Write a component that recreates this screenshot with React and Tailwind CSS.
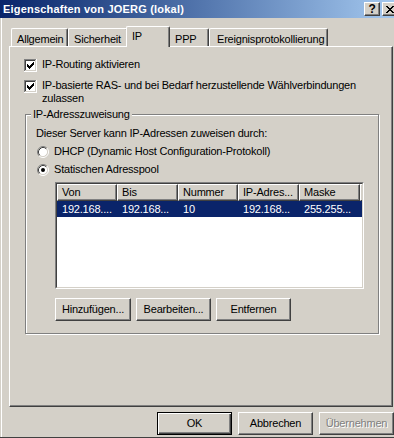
import React from 'react';

const checkPixels = [
  [9, 3, 1],
  [8, 4, 2],
  [3, 5, 1],
  [7, 5, 3],
  [3, 6, 2],
  [6, 6, 3],
  [3, 7, 5],
  [4, 8, 3],
  [5, 9, 1],
];

const closePixels = [
  [0, 0, 2], [6, 0, 2],
  [1, 1, 2], [5, 1, 2],
  [2, 2, 4],
  [3, 3, 2],
  [2, 4, 4],
  [1, 5, 2], [5, 5, 2],
  [0, 6, 2], [6, 6, 2],
];

const CheckBox = () => (
  <svg width="13" height="13" viewBox="0 0 13 13" shapeRendering="crispEdges" className="shrink-0 mt-px">
    <rect x="0" y="0" width="13" height="13" fill="#fff" />
    <rect x="0" y="0" width="12" height="1" fill="#808080" />
    <rect x="0" y="0" width="1" height="12" fill="#808080" />
    <rect x="1" y="1" width="10" height="1" fill="#404040" />
    <rect x="1" y="1" width="1" height="10" fill="#404040" />
    <rect x="1" y="11" width="11" height="1" fill="#d4d0c8" />
    <rect x="11" y="1" width="1" height="11" fill="#d4d0c8" />
    {checkPixels.map(([x, y, w], i) => (
      <rect key={i} x={x} y={y} width={w} height="1" fill="#000" />
    ))}
  </svg>
);

const Radio = ({ checked }) => (
  <svg width="12" height="12" viewBox="0 0 12 12" className="shrink-0">
    <circle cx="6" cy="6" r="4.5" fill="#fff" />
    <path d="M2.11 9.89 A5.5 5.5 0 0 1 9.89 2.11" fill="none" stroke="#808080" strokeWidth="1" />
    <path d="M9.89 2.11 A5.5 5.5 0 0 1 2.11 9.89" fill="none" stroke="#fff" strokeWidth="1" />
    <path d="M2.82 9.18 A4.5 4.5 0 0 1 9.18 2.82" fill="none" stroke="#404040" strokeWidth="1" />
    <path d="M9.18 2.82 A4.5 4.5 0 0 1 2.82 9.18" fill="none" stroke="#d4d0c8" strokeWidth="1" />
    {checked && <circle cx="6" cy="6" r="2" fill="#000" />}
  </svg>
);

const Button = ({ children, className = '' }) => (
  <div
    className={`h-[23px] flex items-center justify-center bg-[#d4d0c8] border border-t-white border-l-white border-r-[#404040] border-b-[#404040] shadow-[inset_-1px_-1px_#808080] ${className}`}
  >
    {children}
  </div>
);

const columns = [
  { title: 'Von', value: '192.168....', w: 'w-[60px]' },
  { title: 'Bis', value: '192.168...', w: 'w-[61px]' },
  { title: 'Nummer', value: '10', w: 'w-[60px]' },
  { title: 'IP-Adres...', value: '192.168...', w: 'w-[61px]' },
  { title: 'Maske', value: '255.255...', w: 'w-[61px]' },
];

export default function App() {
  return (
    <div className="w-[394px] h-[438px] overflow-hidden flex flex-col bg-[#d4d0c8] border-b border-b-[#404040] text-[11px] text-black font-['Liberation_Sans',Arial,sans-serif] tracking-[-0.2px]">
      {/* title bar */}
      <div className="h-[18px] w-[398px] shrink-0 flex items-center bg-linear-to-r from-[#0a246a] to-[#a6caf0]">
        <span className="pl-[3px] pt-px font-bold text-white tracking-[0.2px]">Eigenschaften von JOERG (lokal)</span>
        <div className="ml-auto flex gap-[2px]">
          <div className="w-[16px] h-[14px] flex items-center justify-center bg-[#d4d0c8] border border-t-white border-l-white border-r-[#404040] border-b-[#404040] shadow-[inset_-1px_-1px_#808080] font-bold text-[12px] leading-none">
            ?
          </div>
          <div className="w-[16px] h-[14px] flex items-center justify-center bg-[#d4d0c8] border border-t-white border-l-white border-r-[#404040] border-b-[#404040] shadow-[inset_-1px_-1px_#808080]">
            <svg width="8" height="7" viewBox="0 0 8 7" shapeRendering="crispEdges">
              {closePixels.map(([x, y, w], i) => (
                <rect key={i} x={x} y={y} width={w} height="1" fill="#000" />
              ))}
            </svg>
          </div>
        </div>
      </div>

      <div className="flex-1 ml-px border-l border-white pl-[7px]">
        {/* tabs */}
        <div className="mt-[8px] h-[20px] flex items-end pl-[2px] leading-[13px]">
          <div className="h-[18px] w-[57px] pl-[5px] pt-[4px] border-t border-l border-white border-r border-r-[#404040] rounded-t-[2px] shadow-[inset_-1px_0_#808080]">
            Allgemein
          </div>
          <div className="h-[18px] w-[60px] pl-[5px] pt-[4px] border-t border-l border-white border-r border-r-[#404040] rounded-t-[2px] shadow-[inset_-1px_0_#808080]">
            Sicherheit
          </div>
          <div className="relative z-10 -mb-px -mx-[2px] h-[21px] w-[44px] pl-[5px] pt-[3px] bg-[#d4d0c8] border-t border-l border-white border-r border-r-[#404040] rounded-t-[2px] shadow-[inset_-1px_0_#808080]">
            IP
          </div>
          <div className="h-[18px] w-[41px] pl-[6px] pt-[4px] border-t border-l border-white border-r border-r-[#404040] rounded-t-[2px] shadow-[inset_-1px_0_#808080]">
            PPP
          </div>
          <div className="h-[18px] w-[119px] pl-[7px] pt-[4px] border-t border-l border-white border-r border-r-[#404040] rounded-t-[2px] shadow-[inset_-1px_0_#808080]">
            Ereignisprotokollierung
          </div>
        </div>

        {/* tab panel */}
        <div className="w-[384px] h-[361px] pl-[14px] pt-[11px] border-t border-l border-white border-r border-b border-r-[#404040] border-b-[#404040] shadow-[inset_-1px_-1px_#808080] leading-[13px]">
          <div className="flex items-start gap-[5px]">
            <CheckBox />
            <span>IP-Routing aktivieren</span>
          </div>
          <div className="mt-[7px] flex items-start gap-[5px]">
            <CheckBox />
            <span>
              IP-basierte RAS- und bei Bedarf herzustellende Wählverbindungen
              <br />
              zulassen
            </span>
          </div>

          {/* group box */}
          <div className="relative ml-px mt-[9px] w-[354px] border border-[#808080] shadow-[inset_1px_1px_#fff,1px_1px_#fff] pl-[10px] pt-[12px] pb-[12px]">
            <span className="absolute -top-[7px] left-[5px] px-[2px] bg-[#d4d0c8]">IP-Adresszuweisung</span>
            <div>Dieser Server kann IP-Adressen zuweisen durch:</div>
            <div className="mt-[5px] ml-px flex items-center gap-[5px]">
              <Radio />
              <span>DHCP (Dynamic Host Configuration-Protokoll)</span>
            </div>
            <div className="mt-[5px] ml-px flex items-center gap-[5px]">
              <Radio checked />
              <span>Statischen Adresspool</span>
            </div>

            {/* list view */}
            <div className="ml-[19px] mt-[6px] w-[309px] h-[107px] border border-t-[#808080] border-l-[#808080] border-r-white border-b-white">
              <div className="h-full bg-white border border-t-[#404040] border-l-[#404040] border-r-[#d4d0c8] border-b-[#d4d0c8]">
                <div className="flex h-[17px]">
                  {columns.map((c) => (
                    <div
                      key={c.title}
                      className={`${c.w} shrink-0 pl-[4px] flex items-center bg-[#d4d0c8] border-t border-l border-white border-r border-b border-r-[#404040] border-b-[#404040] shadow-[inset_-1px_-1px_#808080]`}
                    >
                      {c.title}
                    </div>
                  ))}
                  <div className="flex-1 bg-[#d4d0c8] border-t border-l border-white border-b border-b-[#404040]" />
                </div>
                <div className="flex h-[16px] items-center bg-[#0a246a] text-white">
                  {columns.map((c) => (
                    <div key={c.title} className={`${c.w} shrink-0 pl-[5px]`}>
                      {c.value}
                    </div>
                  ))}
                </div>
              </div>
            </div>

            <div className="ml-[19px] mt-[9px] flex gap-[5px]">
              <Button className="w-[76px]">Hinzufügen...</Button>
              <Button className="w-[75px]">Bearbeiten...</Button>
              <Button className="w-[75px]">Entfernen</Button>
            </div>
          </div>
        </div>

        {/* dialog buttons */}
        <div className="mt-[5px] ml-[148px] flex gap-[6px]">
          <div className="w-[75px] h-[23px] flex items-center justify-center border border-black shadow-[inset_1px_1px_#fff,inset_-1px_-1px_#404040,inset_-2px_-2px_#808080]">
            OK
          </div>
          <Button className="w-[75px] shrink-0">Abbrechen</Button>
          <Button className="w-[75px] shrink-0 text-[#808080] [text-shadow:1px_1px_0_#fff]">Übernehmen</Button>
        </div>
      </div>
    </div>
  );
}
